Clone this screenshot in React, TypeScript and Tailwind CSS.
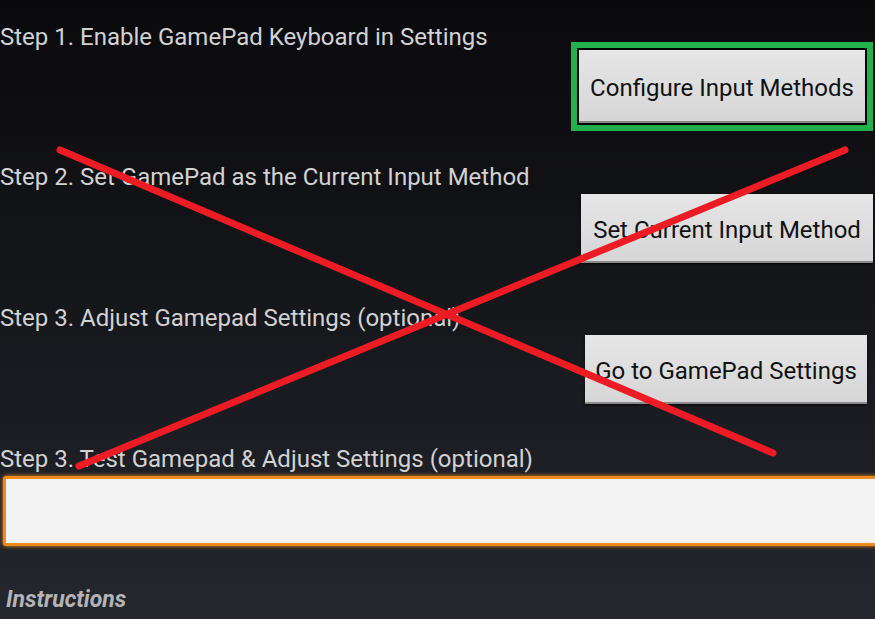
import React from 'react';

const font = { fontFamily: 'Roboto, "Noto Sans", sans-serif' };

function StepButton({ label, className }: { label: string; className: string }) {
  return (
    <button
      className={`flex items-center justify-center pt-[4px] bg-gradient-to-b from-[#e6e6e6] to-[#d6d6d6] border-b-2 border-[#8a8a8a] shadow-[0_1px_2px_rgba(0,0,0,0.8)] text-[24px] text-[#111111] ${className}`}
    >
      {label}
    </button>
  );
}

export default function App() {
  return (
    <div
      className="relative w-[875px] h-[619px] overflow-hidden bg-gradient-to-b from-[#0a0a0c] via-[#16171b] to-[#25272f]"
      style={font}
    >
      <div className="flex flex-col pt-[23px]">
        {/* Step 1 */}
        <div className="flex justify-between items-start h-[140px]">
          <p className="text-[24px] leading-[28px] text-[#d2d2d2]">
            Step 1. Enable GamePad Keyboard in Settings
          </p>
          <div className="mt-[19px] mr-[2px] border-[6px] border-[#22b14c] bg-black p-[2px]">
            <StepButton label="Configure Input Methods" className="w-[286px] h-[73px]" />
          </div>
        </div>

        {/* Step 2 */}
        <div className="flex justify-between items-start h-[141px]">
          <p className="text-[24px] leading-[28px] text-[#d2d2d2]">
            Step 2. Set GamePad as the Current Input Method
          </p>
          <div className="mt-[31px] mr-[2px]">
            <StepButton label="Set Current Input Method" className="w-[292px] h-[69px]" />
          </div>
        </div>

        {/* Step 3 */}
        <div className="flex justify-between items-start h-[141px]">
          <p className="text-[24px] leading-[28px] text-[#d2d2d2]">
            Step 3. Adjust Gamepad Settings (optional)
          </p>
          <div className="mt-[31px] mr-[8px]">
            <StepButton label="Go to GamePad Settings" className="w-[282px] h-[69px]" />
          </div>
        </div>

        {/* Step 4 */}
        <div className="flex flex-col">
          <p className="text-[24px] leading-[28px] text-[#d2d2d2]">
            Step 3. Test Gamepad &amp; Adjust Settings (optional)
          </p>
          <input
            type="text"
            className="mt-[3px] ml-[3px] w-[890px] h-[70px] bg-[#f3f3f3] border-[3px] border-[#f0891c] rounded-[3px] shadow-[0_0_4px_#f0891c] outline-none"
          />
          <p className="mt-[40px] ml-[6px] text-[23px] leading-[28px] italic font-bold text-[#b4b4b6]">
            Instructions
          </p>
        </div>
      </div>

      {/* red cross annotation */}
      <svg className="absolute inset-0 pointer-events-none" width="875" height="619">
        <line x1="60" y1="150" x2="773" y2="453" stroke="#ed1c24" strokeWidth="7" strokeLinecap="round" />
        <line x1="79" y1="466" x2="845" y2="150" stroke="#ed1c24" strokeWidth="7" strokeLinecap="round" />
      </svg>
    </div>
  );
}
